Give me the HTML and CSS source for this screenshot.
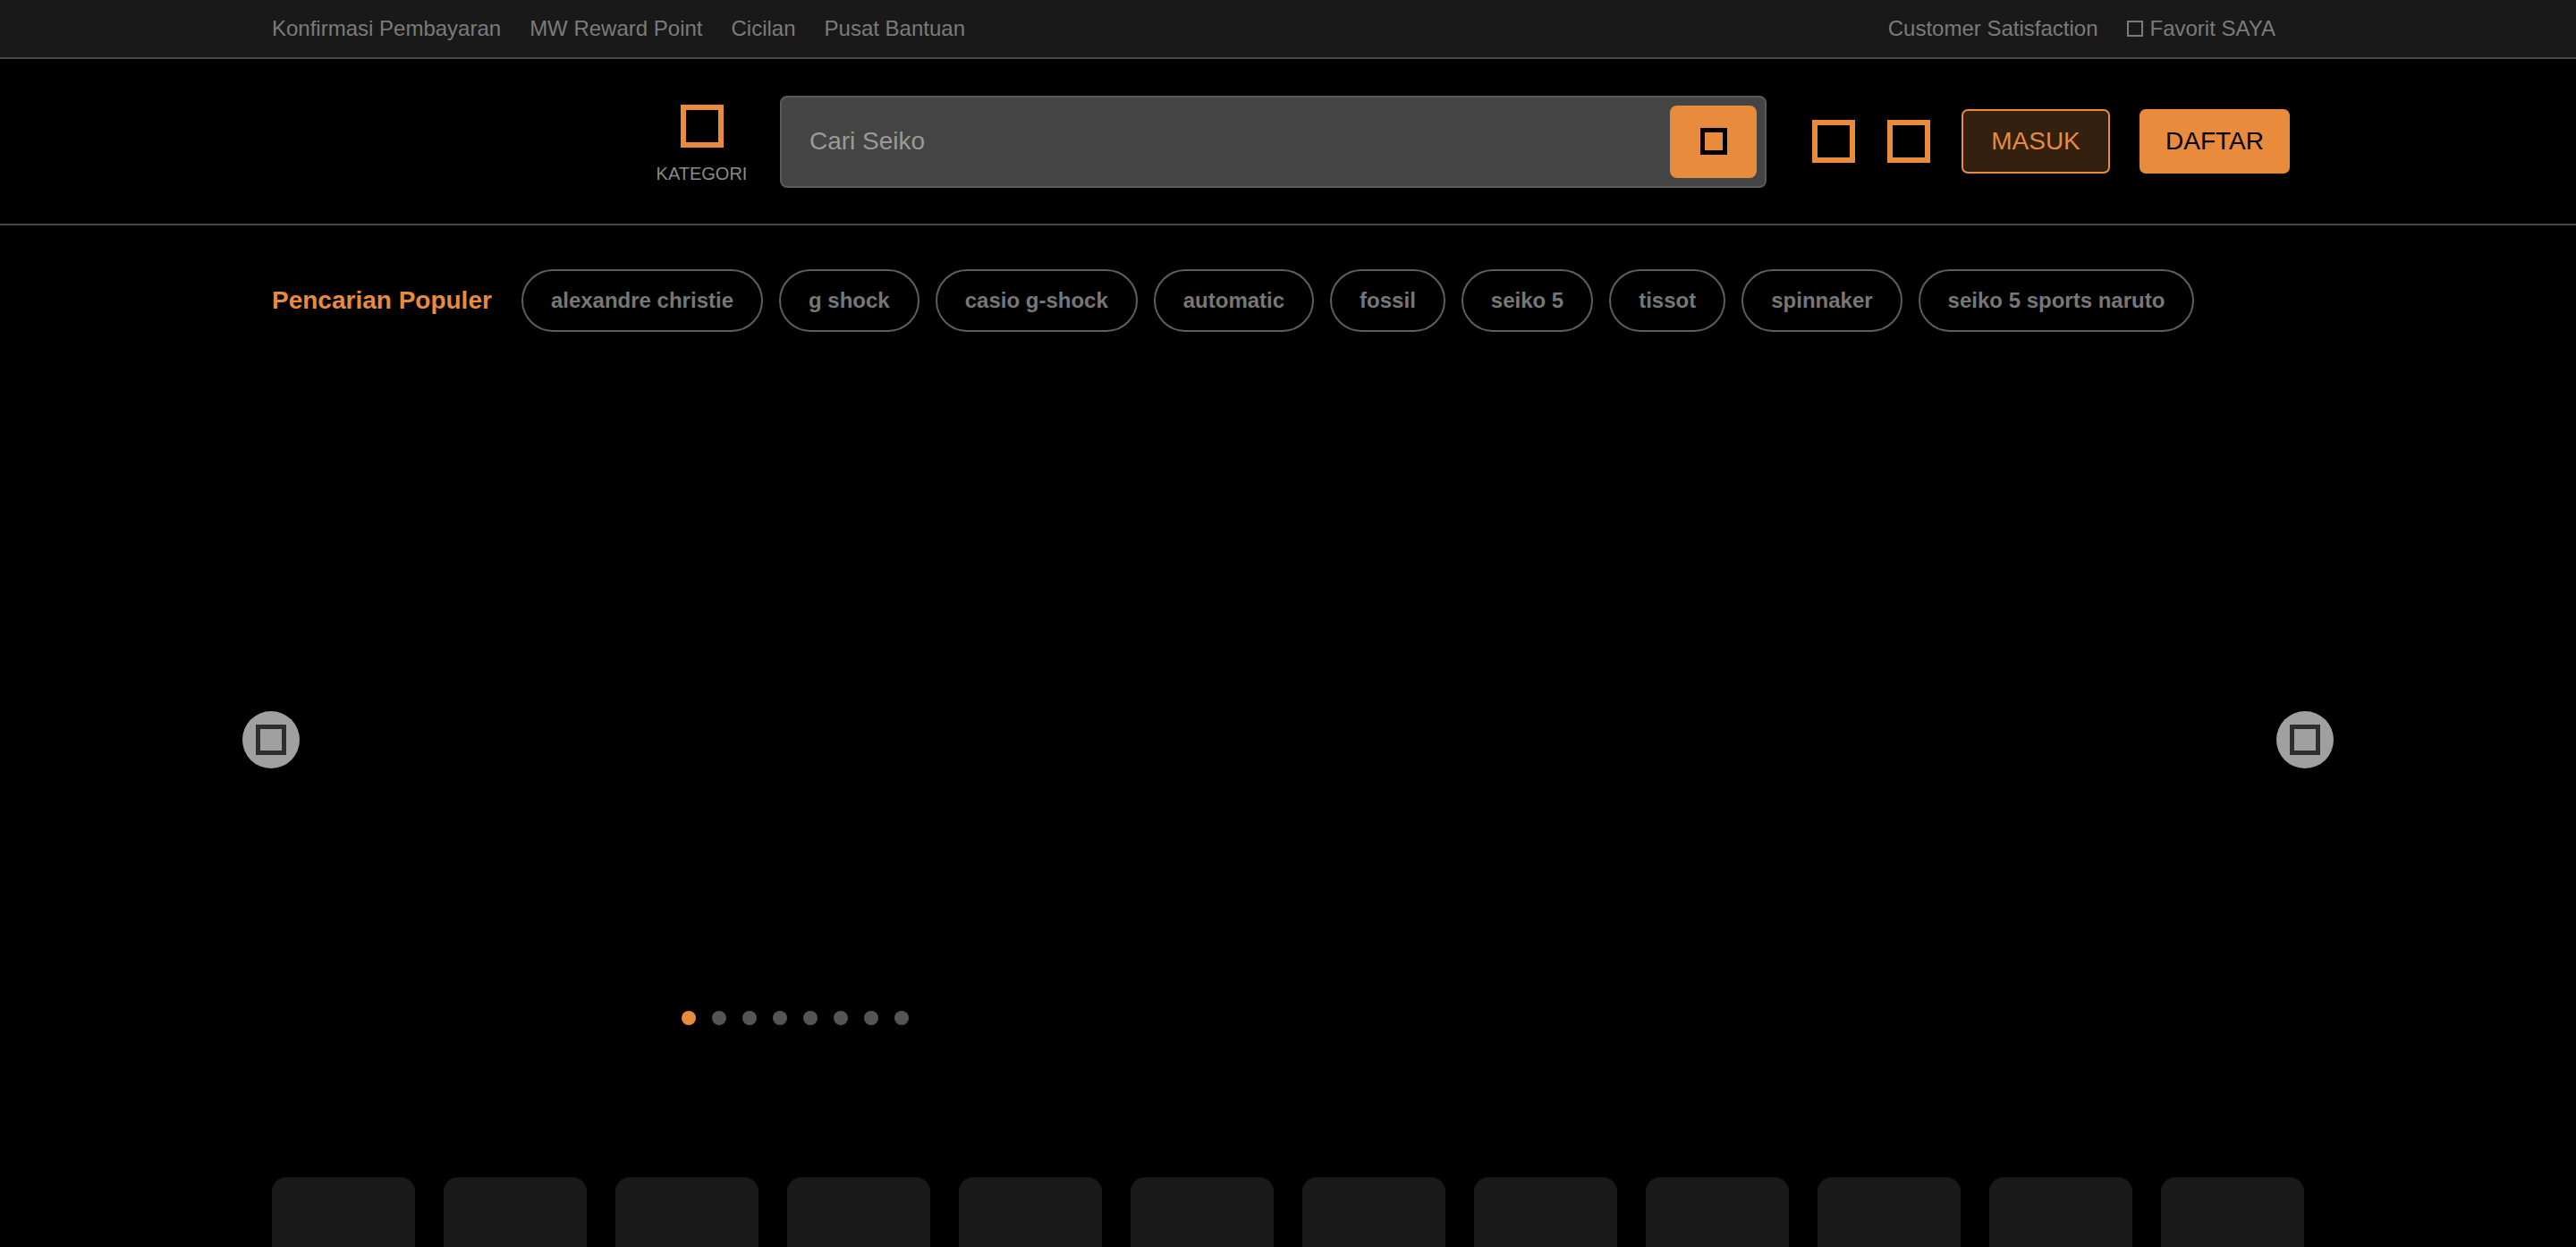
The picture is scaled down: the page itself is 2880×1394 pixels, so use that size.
FILE: index.html
```html
<!DOCTYPE html>
<html lang="id">
<head>
<meta charset="utf-8">
<title>Seiko</title>
<link rel="stylesheet" href="styles.css">
</head>
<body>
<div class="topbar">
  <div class="container topbar-inner">
    <nav class="top-links">
      <a class="top-link">Konfirmasi Pembayaran</a>
      <a class="top-link">MW Reward Point</a>
      <a class="top-link">Cicilan</a>
      <a class="top-link">Pusat Bantuan</a>
    </nav>
    <nav class="top-links top-right">
      <a class="top-link">Customer Satisfaction</a>
      <a class="top-link fav"><span class="fav-box"></span>Favorit SAYA</a>
    </nav>
  </div>
</div>

<header class="header">
  <div class="container header-inner">
    <div class="logo-space"></div>
    <div class="kategori">
      <svg class="icon-48" viewBox="0 0 48 48"><rect x="3" y="3" width="42" height="42" fill="none" stroke="#e88b3c" stroke-width="6"/></svg>
      <span class="kategori-label">KATEGORI</span>
    </div>
    <div class="search">
      <span class="search-placeholder">Cari Seiko</span>
      <button class="search-btn">
        <svg class="icon-search" viewBox="0 0 30 30"><rect x="2.5" y="2.5" width="25" height="25" fill="none" stroke="#000" stroke-width="5"/></svg>
      </button>
    </div>
    <div class="header-icons">
      <svg class="icon-48" viewBox="0 0 48 48"><rect x="3" y="3" width="42" height="42" fill="none" stroke="#e88b3c" stroke-width="6"/></svg>
      <svg class="icon-48" viewBox="0 0 48 48"><rect x="3" y="3" width="42" height="42" fill="none" stroke="#e88b3c" stroke-width="6"/></svg>
    </div>
    <button class="btn btn-masuk">MASUK</button>
    <button class="btn btn-daftar">DAFTAR</button>
  </div>
</header>

<section class="container popular">
  <span class="popular-label">Pencarian Populer</span>
  <div class="chips">
    <span class="chip">alexandre christie</span>
    <span class="chip">g shock</span>
    <span class="chip">casio g-shock</span>
    <span class="chip">automatic</span>
    <span class="chip">fossil</span>
    <span class="chip">seiko 5</span>
    <span class="chip">tissot</span>
    <span class="chip">spinnaker</span>
    <span class="chip">seiko 5 sports naruto</span>
  </div>
</section>

<section class="container carousel">
  <button class="arrow arrow-left"><svg viewBox="0 0 34 34"><rect x="2.5" y="2.5" width="29" height="29" fill="none" stroke="#2e2e2e" stroke-width="5"/></svg></button>
  <button class="arrow arrow-right"><svg viewBox="0 0 34 34"><rect x="2.5" y="2.5" width="29" height="29" fill="none" stroke="#2e2e2e" stroke-width="5"/></svg></button>
  <div class="dots">
    <span class="dot active"></span>
    <span class="dot"></span>
    <span class="dot"></span>
    <span class="dot"></span>
    <span class="dot"></span>
    <span class="dot"></span>
    <span class="dot"></span>
    <span class="dot"></span>
  </div>
</section>

<section class="container categories">
  <div class="cat-card"></div>
  <div class="cat-card"></div>
  <div class="cat-card"></div>
  <div class="cat-card"></div>
  <div class="cat-card"></div>
  <div class="cat-card"></div>
  <div class="cat-card"></div>
  <div class="cat-card"></div>
  <div class="cat-card"></div>
  <div class="cat-card"></div>
  <div class="cat-card"></div>
  <div class="cat-card"></div>
</section>
</body>
</html>
```

FILE: styles.css
```css
* { box-sizing: border-box; }
html, body { margin: 0; padding: 0; }
body {
  background: #000;
  font-family: "Liberation Sans", Arial, sans-serif;
  color: #fff;
  overflow: hidden;
  height: 1394px;
}
.container {
  width: 2272px;
  margin: 0 auto;
}

/* top bar */
.topbar {
  background: #191919;
  height: 66px;
  border-bottom: 2px solid #474747;
}
.topbar-inner {
  height: 64px;
  display: flex;
  align-items: center;
  justify-content: space-between;
}
.top-links {
  display: flex;
  align-items: center;
  gap: 32px;
}
.top-right { padding-right: 32px; }
.top-link {
  font-size: 24px;
  color: #7b7b7b;
  display: flex;
  align-items: center;
}
.fav-box {
  width: 18px;
  height: 18px;
  border: 2px solid #7b7b7b;
  margin-right: 8px;
}

/* header */
.header {
  height: 186px;
  border-bottom: 2px solid #474747;
}
.header-inner {
  height: 184px;
  display: flex;
  align-items: center;
  padding-right: 16px;
}
.logo-space { flex: 1; }
.kategori {
  display: flex;
  flex-direction: column;
  align-items: center;
  width: 107px;
  margin-right: 34px;
  padding-top: 6px;
}
.icon-48 { width: 48px; height: 48px; display: block; }
.kategori-label {
  margin-top: 18px;
  font-size: 20px;
  color: #8a8a8a;
}
.search {
  width: 1103px;
  height: 103px;
  background: #444;
  border: 2px solid #5a5a5a;
  border-radius: 8px;
  display: flex;
  align-items: center;
  justify-content: space-between;
  padding: 0 9px 0 31px;
}
.search-placeholder {
  font-size: 28px;
  color: #9a9a9a;
}
.search-btn {
  width: 97px;
  height: 81px;
  background: #e88b3c;
  border: none;
  border-radius: 8px;
  display: flex;
  align-items: center;
  justify-content: center;
  padding: 0;
}
.icon-search { width: 30px; height: 30px; display: block; }
.header-icons {
  display: flex;
  gap: 36px;
  margin-left: 51px;
  margin-right: 35px;
}
.btn {
  height: 72px;
  border-radius: 7px;
  font-family: "Liberation Sans", Arial, sans-serif;
  font-size: 28px;
  padding: 0;
}
.btn-masuk {
  width: 166px;
  background: #33200f;
  border: 2px solid #e88b3c;
  color: #e88b3c;
  margin-right: 33px;
}
.btn-daftar {
  width: 168px;
  background: #e88b3c;
  border: none;
  color: #000;
}

/* popular */
.popular {
  display: flex;
  align-items: center;
  padding-top: 49px;
}
.popular-label {
  font-size: 28px;
  font-weight: bold;
  color: #e88b3c;
  margin-right: 33px;
}
.chips {
  display: flex;
  gap: 18px;
}
.chip {
  height: 70px;
  border: 2px solid #5e5e5e;
  border-radius: 35px;
  padding: 0 31px;
  display: flex;
  align-items: center;
  font-size: 24px;
  font-weight: bold;
  color: #777;
}

/* carousel */
.carousel {
  position: relative;
  height: 800px;
  margin-top: 55px;
}
.arrow {
  position: absolute;
  top: 369px;
  width: 64px;
  height: 64px;
  border-radius: 50%;
  background: #a0a0a0;
  border: none;
  padding: 0;
  display: flex;
  align-items: center;
  justify-content: center;
}
.arrow svg { width: 34px; height: 34px; display: block; }
.arrow-left { left: -33px; }
.arrow-right { right: -33px; }
.dots {
  position: absolute;
  left: 458px;
  top: 704px;
  display: flex;
  gap: 18px;
}
.dot {
  width: 16px;
  height: 16px;
  border-radius: 50%;
  background: #555;
}
.dot.active { background: #e88b3c; }

/* categories */
.categories {
  display: flex;
  gap: 32px;
  margin-top: 90px;
}
.cat-card {
  width: 160px;
  height: 160px;
  border-radius: 16px;
  background: #191919;
}
```
